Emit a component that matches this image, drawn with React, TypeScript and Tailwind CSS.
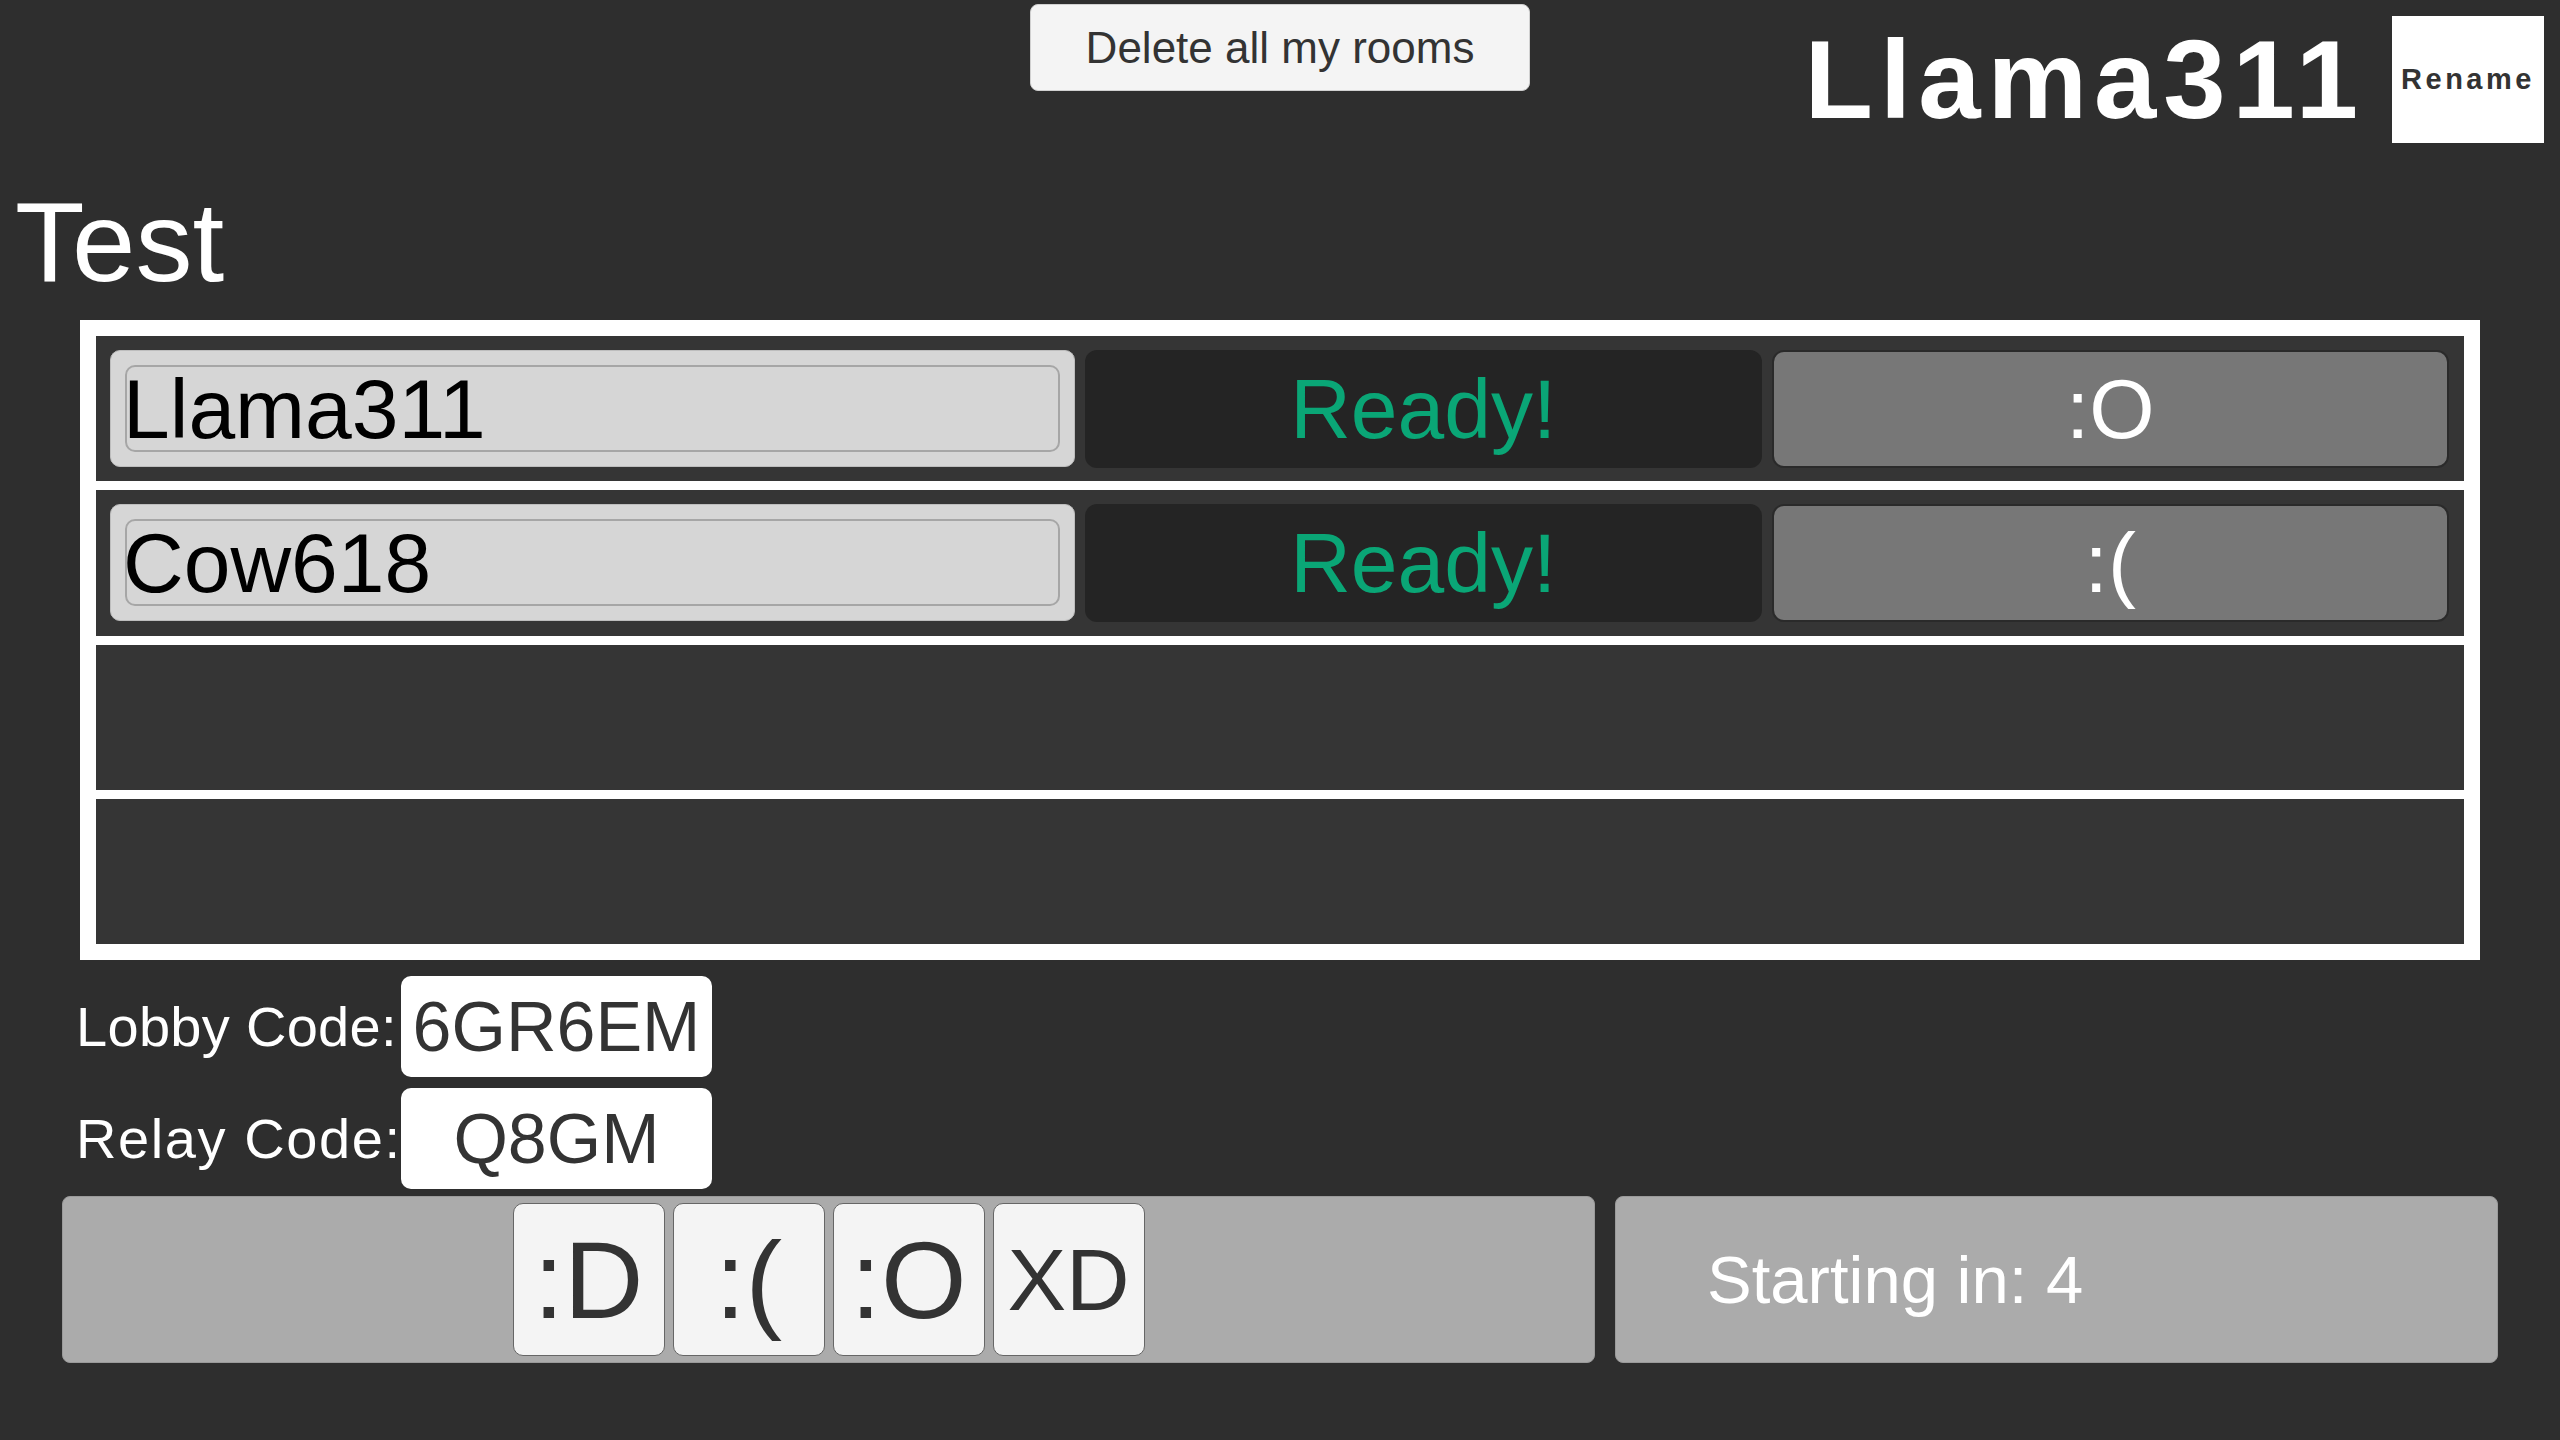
import React from "react";

const font = { fontFamily: '"Liberation Sans", Arial, sans-serif' };

type Player = { name: string; emote: string };

const players: Player[] = [
  { name: "Llama311", emote: ":O" },
  { name: "Cow618", emote: ":(" },
];

function PlayerRow({ p }: { p: Player }) {
  return (
    <div className="flex-1 bg-[#353535] grid grid-cols-[965px_1fr_1fr] gap-x-[9.5px] pl-[14px] pr-[15px] items-center">
      <div className="h-[117px] bg-[#d6d6d6] rounded-[10px] border border-[#bdbdbd] p-[14px]">
        <div className="h-full rounded-[10px] border-[2px] border-[#a6a6a6] flex items-center overflow-visible">
          <span className="text-[84px] leading-none text-black -ml-[4px]">{p.name}</span>
        </div>
      </div>
      <div className="h-[118px] bg-[#242424] rounded-[12px] flex items-center justify-center">
        <span className="text-[84px] leading-none text-[#0aa676]">Ready!</span>
      </div>
      <div className="h-[118px] bg-[#777777] rounded-[12px] border-[2px] border-[#2a2a2a] flex items-center justify-center">
        <span className="text-[84px] leading-none text-white">{p.emote}</span>
      </div>
    </div>
  );
}

function EmptyRow() {
  return <div className="flex-1 bg-[#353535]" />;
}

const emotes: { label: string; size: string }[] = [
  { label: ":D", size: "text-[110px]" },
  { label: ":(", size: "text-[110px]" },
  { label: ":O", size: "text-[110px]" },
  { label: "XD", size: "text-[88px]" },
];

export default function App() {
  return (
    <div className="w-[2560px] h-[1440px] bg-[#2e2e2e] overflow-hidden flex flex-col" style={font}>
      {/* Header */}
      <div className="h-[188px] grid grid-cols-[1fr_500px_1fr]">
        <div />
        <div className="pt-[4px]">
          <button className="w-[500px] h-[87px] bg-[#f4f4f4] rounded-[8px] border border-[#d0d0d0] flex items-center justify-center text-[44px] leading-none text-[#333333]">
            Delete all my rooms
          </button>
        </div>
        <div className="flex justify-end items-start pr-[16px] pt-[16px]">
          <div className="flex items-center gap-[27px] h-[127px]">
            <span className="text-[112px] leading-[112px] font-bold tracking-[7px] text-white">Llama311</span>
            <button className="w-[152px] h-[127px] bg-white flex items-center justify-center text-[29px] leading-none font-bold tracking-[3.5px] text-[#333333]">
              Rename
            </button>
          </div>
        </div>
      </div>

      {/* Title */}
      <div className="h-[132px] pl-[15px] text-[114px] leading-[108px] text-white">Test</div>

      {/* Player frame */}
      <div className="mx-[80px] h-[640px] bg-white p-[16px]">
        <div className="h-full flex flex-col gap-[9px]">
          {players.map((p) => (
            <PlayerRow key={p.name} p={p} />
          ))}
          <EmptyRow />
          <EmptyRow />
        </div>
      </div>

      {/* Codes */}
      <div className="mt-[16px] flex flex-col gap-[11px]">
        <div className="flex items-center">
          <div className="w-[401px] pl-[76px] text-[56px] leading-none text-white whitespace-nowrap tracking-[0.3px]">Lobby Code:</div>
          <div className="w-[311px] h-[101px] bg-white rounded-[10px] flex items-center justify-center text-[70px] leading-none text-[#333333]">
            6GR6EM
          </div>
        </div>
        <div className="flex items-center">
          <div className="w-[401px] pl-[76px] text-[56px] leading-none text-white whitespace-nowrap tracking-[1.6px]">Relay Code:</div>
          <div className="w-[311px] h-[101px] bg-white rounded-[10px] flex items-center justify-center text-[70px] leading-none text-[#333333]">
            Q8GM
          </div>
        </div>
      </div>

      {/* Bottom bar */}
      <div className="mt-[7px] px-[62px] flex gap-[20px] h-[167px]">
        <div className="w-[1533px] h-full bg-[#ababab] rounded-[8px] border border-[#9a9a9a] flex items-center justify-center gap-[8px]">
          {emotes.map((e) => (
            <button
              key={e.label}
              className={
                "w-[152px] h-[153px] bg-[#f4f4f4] rounded-[10px] border border-[#666666] flex items-center justify-center leading-none text-[#333333] " +
                e.size
              }
            >
              {e.label}
            </button>
          ))}
        </div>
        <div className="flex-1 h-full bg-[#ababab] rounded-[8px] border border-[#9a9a9a] flex items-center pl-[91px]">
          <span className="text-[67px] leading-none text-white">Starting in: 4</span>
        </div>
      </div>
    </div>
  );
}
